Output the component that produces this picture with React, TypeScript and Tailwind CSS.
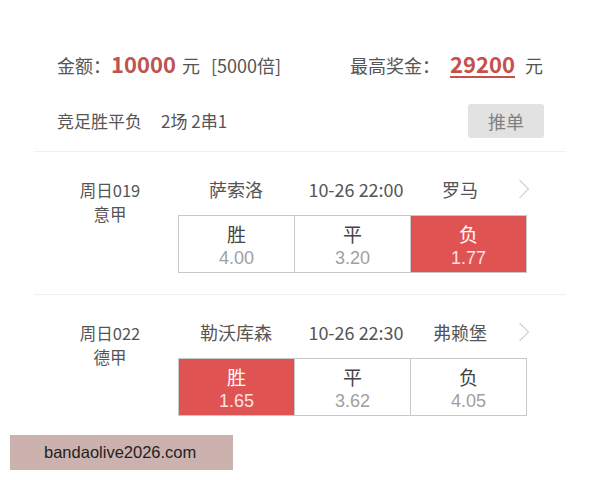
import React from "react";

const cjk = { fontFamily: '"Noto Sans CJK SC", "Noto Sans", sans-serif' };
const latin = { fontFamily: '"Liberation Sans", Arial, sans-serif' };

type Opt = { label: string; odds: string; selected?: boolean };

function Match({ code, league, home, time, away, opts }: { code: string; league: string; home: string; time: string; away: string; opts: Opt[] }) {
  return (
    <div className="flex pt-[25px] pb-[21px] border-t border-[#f0f0f0] mx-[34px]">
      <div className="w-[152px] flex flex-col items-center pt-[1px] text-[16.5px] leading-[24px] text-[#555]">
        <div>{code}</div>
        <div>{league}</div>
      </div>
      <div className="flex flex-col -ml-[8px]">
        <div className="flex items-center h-[24px] text-[18px] text-[#555]">
          <div className="w-[116px] text-center">{home}</div>
          <div className="w-[124px] text-center">{time}</div>
          <div className="w-[84px] text-center">{away}</div>
          <svg className="ml-[16px]" width="12" height="20" viewBox="0 0 12 20" fill="none">
            <path d="M1.5 1 L10.5 10 L1.5 19" stroke="#b5b5b5" strokeWidth="1" />
          </svg>
        </div>
        <div className="mt-[14px] flex w-[349px] h-[58px] border border-[#c8c8c8]">
          {opts.map((o, i) => (
            <div
              key={i}
              className={`flex-1 flex flex-col items-center justify-center pt-[2px] ${i > 0 ? "border-l border-[#c8c8c8]" : ""} ${o.selected ? "bg-[#e05353]" : "bg-white"}`}
            >
              <div className={`text-[19px] leading-[22px] ${o.selected ? "text-white" : "text-[#444]"}`}>{o.label}</div>
              <div
                className={`mt-[3px] text-[18px] leading-[20px] ${o.selected ? "text-[#fde0e0]" : "text-[#a0a0a0]"}`}
                style={latin}
              >
                {o.odds}
              </div>
            </div>
          ))}
        </div>
      </div>
    </div>
  );
}

export default function App() {
  return (
    <div className="w-[600px] h-[480px] bg-white relative overflow-hidden" style={cjk}>
      <div className="pt-[50px] px-[57px]">
        <div className="flex items-center justify-between h-[26px] text-[18px] text-[#555]">
          <div className="flex items-baseline">
            <span>金额：</span>
            <span className="text-[22px] font-bold text-[#bd5450]">10000</span>
            <span className="ml-[6px]">元</span>
            <span className="ml-[11px]">[5000倍]</span>
          </div>
          <div className="flex items-baseline">
            <span>最高奖金：</span>
            <span className="ml-[10px] text-[22px] font-bold text-[#c8504a] underline underline-offset-[3px]">29200</span>
            <span className="ml-[10px]">元</span>
          </div>
        </div>
        <div className="flex items-center justify-between mt-[28px] mb-[13px]">
          <div className="text-[17px] text-[#555]">
            竞足胜平负<span className="ml-[19px]">2场 2串1</span>
          </div>
          <div className="w-[76px] h-[34px] -mr-[1px] rounded-[3px] bg-[#e2e2e2] flex items-center justify-center text-[18px] text-[#808080]">
            推单
          </div>
        </div>
      </div>
      <Match
        code="周日019"
        league="意甲"
        home="萨索洛"
        time="10-26 22:00"
        away="罗马"
        opts={[{ label: "胜", odds: "4.00" }, { label: "平", odds: "3.20" }, { label: "负", odds: "1.77", selected: true }]}
      />
      <Match
        code="周日022"
        league="德甲"
        home="勒沃库森"
        time="10-26 22:30"
        away="弗赖堡"
        opts={[{ label: "胜", odds: "1.65", selected: true }, { label: "平", odds: "3.62" }, { label: "负", odds: "4.05" }]}
      />
      <div
        className="absolute left-[10px] top-[435px] w-[223px] h-[35px] bg-[#cbb2af] flex items-center pl-[34px] text-[16.5px] text-[#222]"
        style={latin}
      >
        bandaolive2026.com
      </div>
    </div>
  );
}
